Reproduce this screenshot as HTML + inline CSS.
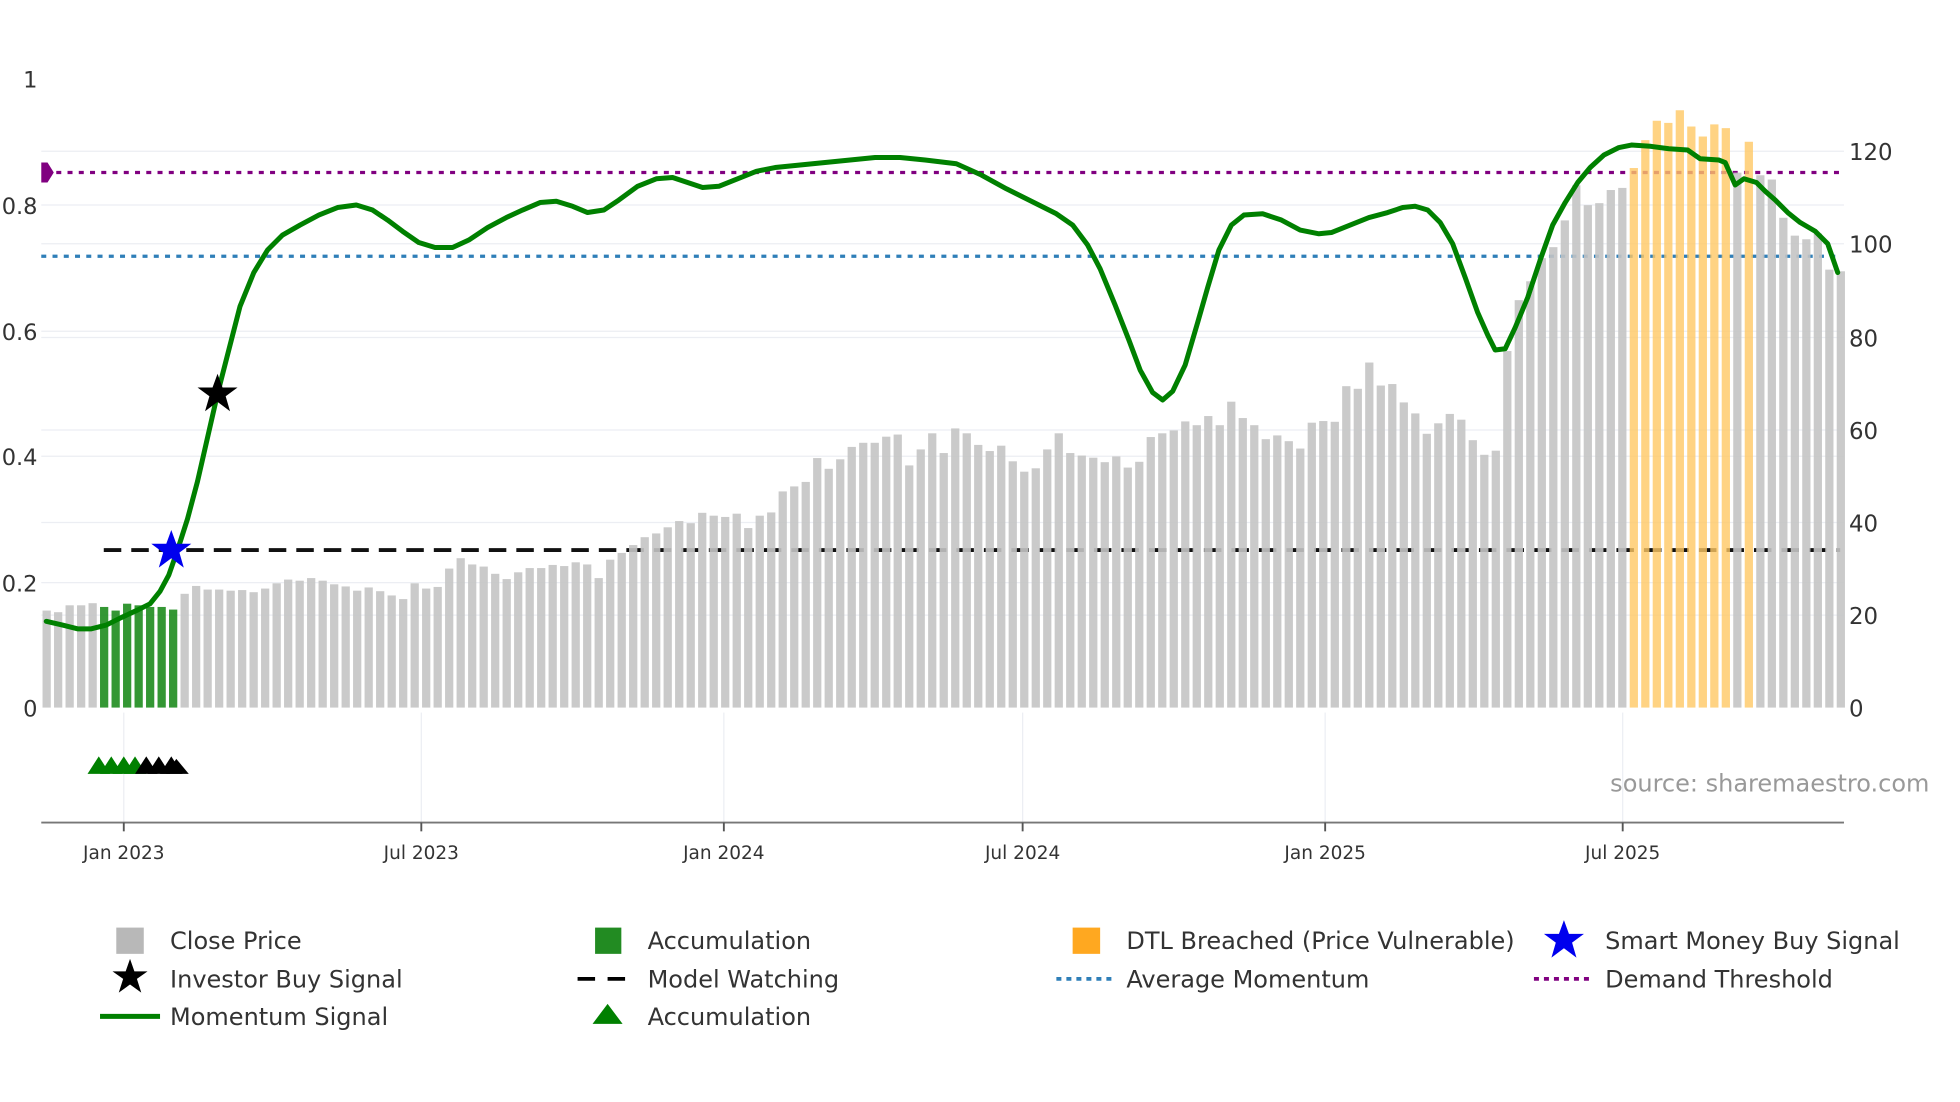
<!DOCTYPE html>
<html><head><meta charset="utf-8"><style>
html,body{margin:0;padding:0;background:#fff;}
svg{display:block;}
text{font-family:"DejaVu Sans","Liberation Sans",sans-serif;fill:#333;}
</style></head><body>
<svg id="s" width="1960" height="1102" viewBox="0 0 1567.8 881.5" xmlns="http://www.w3.org/2000/svg">
<rect width="1567.8" height="881.5" fill="#fff"/>
<g stroke="#eceef3" stroke-width="1">
<line x1="33" x2="1475" y1="164" y2="164"/><line x1="33" x2="1475" y1="265" y2="265"/>
<line x1="33" x2="1475" y1="365" y2="365"/><line x1="33" x2="1475" y1="466" y2="466"/>
<line x1="33" x2="1475" y1="121" y2="121"/><line x1="33" x2="1475" y1="195" y2="195"/>
<line x1="33" x2="1475" y1="270" y2="270"/><line x1="33" x2="1475" y1="344" y2="344"/>
<line x1="33" x2="1475" y1="418" y2="418"/><line x1="33" x2="1475" y1="492" y2="492"/>
<line x1="99" x2="99" y1="570" y2="658"/><line x1="337" x2="337" y1="570" y2="658"/>
<line x1="579" x2="579" y1="570" y2="658"/><line x1="818" x2="818" y1="570" y2="658"/>
<line x1="1060" x2="1060" y1="570" y2="658"/><line x1="1298" x2="1298" y1="570" y2="658"/>
</g>
<line x1="36" x2="1472" y1="138" y2="138" stroke="#800080" stroke-width="2.6" stroke-dasharray="4,5"/>
<line x1="33" x2="1472" y1="205" y2="205" stroke="#2f7fb8" stroke-width="2.6" stroke-dasharray="4,5"/>
<line x1="83" x2="1472" y1="440" y2="440" stroke="#111" stroke-width="3" stroke-dasharray="14,8"/>
<g id="bars"></g>
<path d="M33,130 L38,130 L43,138 L38,146 L33,146 Z" fill="#800080"/>
<path id="mom" fill="none" stroke="#008000" stroke-width="4" stroke-linejoin="round" stroke-linecap="round" d=""/>
<path d="M174,299 L178,310 L190,310 L180.5,317 L184,329 L174,321.5 L164,329 L167.5,317 L158,310 L170,310 Z" fill="#000"/>
<path d="M137,424 L141,435 L153,435 L143.5,442 L147,454 L137,446.5 L127,454 L130.5,442 L121,435 L133,435 Z" fill="#0000ee"/>
<g fill="#008000"><path d="M70,619 L79,605 L88,619Z"/><path d="M80,619 L89,605 L98,619Z"/><path d="M90,619 L99,605 L108,619Z"/><path d="M99,619 L108,605 L117,619Z"/></g>
<g fill="#000"><path d="M108,619 L117,605 L126,619Z"/><path d="M118,619 L127,605 L136,619Z"/><path d="M128,619 L137,605 L146,619Z"/><path d="M133,619 L141,607 L151,619Z"/></g>
<line x1="33" x2="1475" y1="658" y2="658" stroke="#777" stroke-width="1.5"/>
<g stroke="#555" stroke-width="1.5"><line x1="99" x2="99" y1="658" y2="665"/><line x1="337" x2="337" y1="658" y2="665"/><line x1="579" x2="579" y1="658" y2="665"/><line x1="818" x2="818" y1="658" y2="665"/><line x1="1060" x2="1060" y1="658" y2="665"/><line x1="1298" x2="1298" y1="658" y2="665"/></g>
<g font-size="18" text-anchor="end">
<text x="30" y="70">1</text><text x="30" y="171">0.8</text><text x="30" y="272">0.6</text><text x="30" y="372">0.4</text><text x="30" y="473">0.2</text><text x="30" y="573">0</text>
</g>
<g font-size="18.3">
<text x="1479" y="128">120</text><text x="1479" y="202">100</text><text x="1479" y="277">80</text><text x="1479" y="351">60</text><text x="1479" y="425">40</text><text x="1479" y="499">20</text><text x="1479" y="573">0</text>
</g>
<g font-size="14.8" text-anchor="middle">
<text x="99" y="687">Jan 2023</text><text x="337" y="687">Jul 2023</text><text x="579" y="687">Jan 2024</text><text x="818" y="687">Jul 2024</text><text x="1060" y="687">Jan 2025</text><text x="1298" y="687">Jul 2025</text>
</g>
<text x="1288" y="633" font-size="19.2" style="fill:#999">source: sharemaestro.com</text>
<g font-size="19.2">
<rect x="93" y="742" width="22" height="21" fill="#b8b8b8"/><text x="136" y="759">Close Price</text>
<path d="M104,767 L107.5,777 L118,777 L109.5,783 L113,794 L104,787.5 L95,794 L98.5,783 L90,777 L100.5,777 Z" fill="#000"/><text x="136" y="790">Investor Buy Signal</text>
<line x1="80" x2="128" y1="813" y2="813" stroke="#008000" stroke-width="4"/><text x="136" y="820">Momentum Signal</text>
<rect x="476" y="742" width="21" height="21" fill="#228b22"/><text x="518" y="759">Accumulation</text>
<line x1="462" x2="506" y1="783" y2="783" stroke="#000" stroke-width="3" stroke-dasharray="14,10"/><text x="518" y="790">Model Watching</text>
<path d="M474,819 L486,803 L498,819Z" fill="#008000"/><text x="518" y="820">Accumulation</text>
<rect x="858" y="742" width="22" height="21" fill="#ffa820"/><text x="901" y="759">DTL Breached (Price Vulnerable)</text>
<line x1="845" x2="889" y1="783" y2="783" stroke="#2f7fb8" stroke-width="3" stroke-dasharray="4,4"/><text x="901" y="790">Average Momentum</text>
<path d="M1251,736 L1255,747 L1267,747 L1257.5,754 L1261,766 L1251,758.5 L1241,766 L1244.5,754 L1235,747 L1247,747 Z" fill="#0000ee"/><text x="1284" y="759">Smart Money Buy Signal</text>
<line x1="1227" x2="1271" y1="783" y2="783" stroke="#800080" stroke-width="3" stroke-dasharray="4,4"/><text x="1284" y="790">Demand Threshold</text>
</g>
</svg>
<script>
var tops=[488.4,489.7,484.2,484.2,482.5,485.5,488.4,482.9,484.2,485.5,485.5,487.6,
475,468.7,471.6,471.6,472.5,472,473.7,470.8,466.6,463.6,464.5,462.4,464.5,467.4,469.1,472.5,469.9,472.9,476.3,479.2,466.6,470.8,469.5,454.8,446.5,451.5,453.2,459,463.2,457.8,454.4,454.4,451.9,452.8,449.8,451.5,462.4,447.7,442.3,436,429.7,
426.7,421.8,416.8,418.5,410.2,412.5,413.5,410.9,422.4,412.5,409.9,393.1,389.1,385.5,366.4,375,367.4,357.5,354.2,354.2,349.3,347.6,372.3,359.5,346.6,362.4,342.7,346.6,355.9,360.8,356.5,369,377.3,374.6,359.5,346.6,362.4,364.4,366.1,369.7,365.1,374,369.4,349.6,346.6,344.3,337.1,340.1,332.8,340.1,321.3,334.4,340.1,351.3,348.3,352.9,358.8,338.1,336.8,337.4,
308.9,311,290,308.4,307.2,321.9,330.7,347,338.6,331.1,335.7,352.1,363.8,360.5,280.8,240.1,225,206.5,197.7,176.3,148.2,164.1,162.5,152,150.3,
134.4,112.1,96.6,98.3,88.2,101.2,109.2,99.5,102.5,138.1,113.4,140.2,143.6,174.2,188.5,191.4,186.8,215.7,217];
var orange={138:1,139:1,140:1,141:1,142:1,143:1,144:1,145:1,146:1,148:1};
var g=document.getElementById('bars'),h='';
for(var i=0;i<tops.length;i++){var x=37.3+i*9.2-3.3,c='#c4c4c4',o=0.9;
if(i>=5&&i<=11){c='#1e8c1e';o=0.9;} if(orange[i]){c='#ffc864';o=0.8;}
h+='<rect x="'+x.toFixed(1)+'" y="'+tops[i]+'" width="6.6" height="'+(566-tops[i]).toFixed(1)+'" fill="'+c+'" fill-opacity="'+o+'"/>';}
g.innerHTML=h;
var p=[[37,497],[50,500],[62,503],[73,503],[85,500],[97,494],[110,488],[120,483],[128,473],[135,460],[142,440],[150,415],[158,385],[166,350],[174,315],[183,280],[192,245],[203,218],[214,200],[226,188],[240,180],[255,172],[270,166],[285,164],[298,168],[310,176],[322,185],[335,194],[348,198],[362,198],[375,192],[390,182],[405,174],[418,168],[432,162],[445,161],[458,165],[470,170],[483,168],[495,160],[510,149],[525,143],[538,142],[550,146],[562,150],[575,149],[590,143],[605,137],[620,134],[640,132],[660,130],[680,128],[700,126],[720,126],[740,128],[765,131],[785,140],[805,151],[825,161],[845,171],[858,180],[870,196],[880,215],[892,244],[903,272],[912,296],[922,314],[930,320],[938,313],[948,292],[958,258],[966,230],[975,200],[985,180],[995,172],[1010,171],[1025,176],[1040,184],[1055,187],[1065,186],[1080,180],[1095,174],[1110,170],[1122,166],[1132,165],[1142,168],[1152,178],[1162,195],[1172,222],[1182,250],[1190,268],[1196,280],[1204,279],[1212,262],[1222,238],[1232,208],[1242,180],[1252,162],[1262,146],[1272,134],[1283,124],[1295,118],[1305,116],[1320,117],[1335,119],[1350,120],[1360,127],[1375,128],[1380,130],[1388,148],[1395,143],[1405,146],[1412,153],[1420,160],[1430,170],[1440,178],[1452,185],[1462,195],[1470,218]];
var d='M'+p[0][0]+','+p[0][1];for(var k=1;k<p.length;k++)d+=' L'+p[k][0]+','+p[k][1];
document.getElementById('mom').setAttribute('d',d);
</script>
</body></html>
